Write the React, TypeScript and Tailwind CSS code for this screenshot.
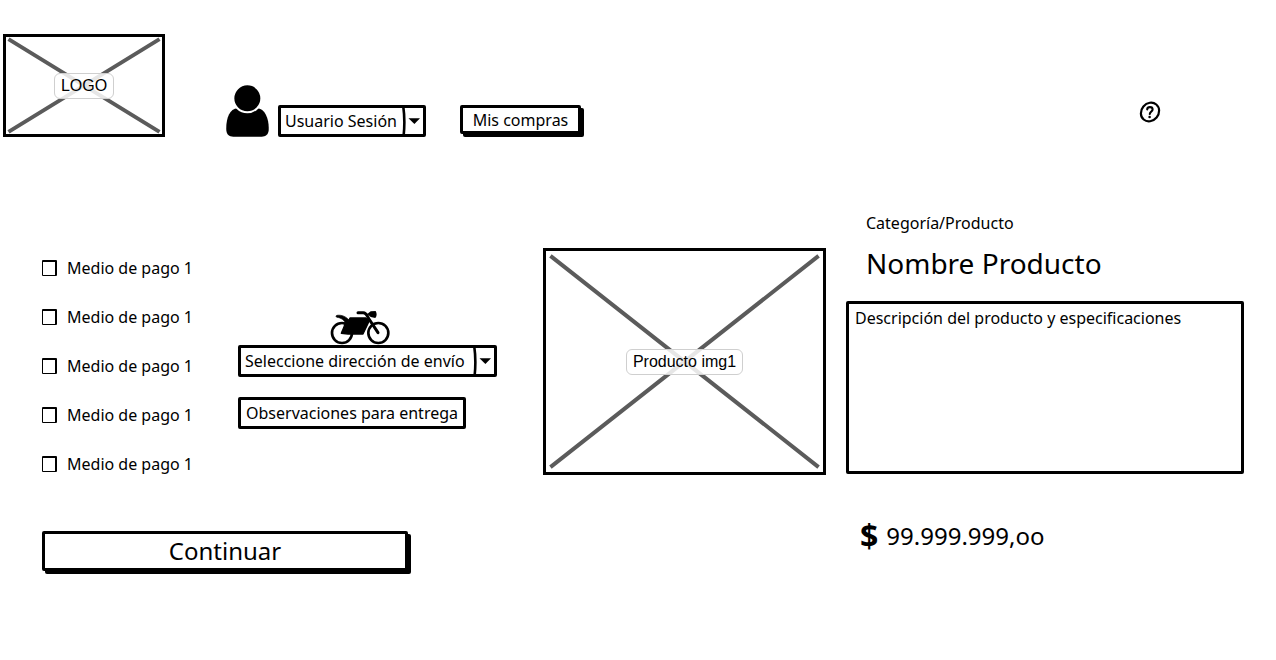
import React from "react";

const payments = [
  "Medio de pago 1",
  "Medio de pago 1",
  "Medio de pago 1",
  "Medio de pago 1",
  "Medio de pago 1",
];

function Placeholder({ label, className }: { label: string; className: string }) {
  return (
    <div
      role="img"
      aria-label={label}
      className={`relative flex items-center justify-center border-3 border-black ${className}`}
    >
      <svg
        className="absolute inset-0 size-full"
        viewBox="0 0 100 100"
        preserveAspectRatio="none"
        aria-hidden="true"
      >
        <path
          d="M1.6 2.2 L98.4 97.8 M98.4 2.2 L1.6 97.8"
          stroke="#5b5b5b"
          strokeWidth="4"
          fill="none"
          vectorEffect="non-scaling-stroke"
        />
      </svg>
      <span className="relative rounded-md border border-[#cfcfcf] bg-white/85 px-1.5 font-['Liberation_Sans',sans-serif] text-base leading-6">
        {label}
      </span>
    </div>
  );
}

function SelectBox({ id, label, className }: { id: string; label: string; className: string }) {
  return (
    <div className={`relative ${className}`}>
      <select
        id={id}
        aria-label={label}
        className="block h-8 w-full appearance-none rounded-xs border-3 border-black bg-white pr-6 pl-1 text-base leading-6"
      >
        <option>{label}</option>
      </select>
      <svg
        className="pointer-events-none absolute top-0 right-0 h-8 w-6"
        viewBox="0 0 24 32"
        aria-hidden="true"
      >
        <path d="M1.2 1 C2.5 10 2.8 20 1.6 31" stroke="black" strokeWidth="2.6" fill="none" />
        <path d="M6.5 13.2 H18 L12.4 19 Z" fill="black" />
      </svg>
    </div>
  );
}

function UserIcon() {
  return (
    <svg className="h-[52px] w-11 shrink-0" viewBox="30 28 132 156" aria-hidden="true">
      <path
        d="M34 164 C32 135 42 98 68 98 H126 C152 98 163 135 161 164 C160 177 152 183 140 183 H55 C42 183 35 177 34 164 Z"
        fill="black"
      />
      <circle cx="97" cy="68" r="42" fill="black" stroke="white" strokeWidth="6" />
    </svg>
  );
}

function HelpIcon() {
  return (
    <svg className="size-[22px]" viewBox="0 0 22 22" fill="none" stroke="black" aria-hidden="true">
      <ellipse cx="11" cy="11" rx="9.8" ry="8.6" strokeWidth="2.2" transform="rotate(-50 11 11)" />
      <path d="M8.2 8.4 C8.4 5.4 13.6 5.3 13.6 8.5 C13.6 10.5 11 10.6 10.8 13" strokeWidth="2.1" strokeLinecap="round" />
      <circle cx="10.6" cy="16" r="1.3" fill="black" stroke="none" />
    </svg>
  );
}

function MotorbikeIcon() {
  return (
    <svg className="h-[35px] w-[60px]" viewBox="30 18 180 105" fill="none" stroke="black" aria-hidden="true">
      <circle cx="66" cy="87" r="30" strokeWidth="8" />
      <circle cx="175" cy="87" r="30" strokeWidth="8" />
      <path
        d="M51 34 C64 32 77 37 87 48 L78 62 C74 48 62 41 51 40 C47 39 47 35 51 34 Z"
        fill="black"
        strokeWidth="2"
        strokeLinejoin="round"
      />
      <path
        d="M90 42 H138 L149 48 L129 90 H84 L64 88 C66 80 73 70 74 62 L84 54 Z"
        fill="black"
        strokeWidth="4"
        strokeLinejoin="round"
      />
      <path d="M114 26 H130 C140 26 141 36 147 45 L174 86" strokeWidth="9" strokeLinecap="round" strokeLinejoin="round" />
      <path d="M142 30 L152 22 L167 21 C171 28 171 36 166 42 L152 39 Z" fill="black" stroke="none" />
    </svg>
  );
}

export default function App() {
  return (
    <div className="min-h-screen bg-white pt-[34px] pb-10 font-['Noto_Sans',sans-serif] text-base text-black">
      <header className="flex items-end pr-[115px] pl-[3px]">
        <Placeholder label="LOGO" className="h-[103px] w-[162px]" />
        <div className="ml-[60px] flex items-end gap-[9px]">
          <UserIcon />
          <SelectBox id="session" label="Usuario Sesión" className="w-[148px]" />
        </div>
        <button
          type="button"
          className="mb-[3px] ml-[34px] h-[29px] w-[121px] rounded-xs border-3 border-black bg-white leading-5 shadow-[3px_3px_0_black]"
        >
          Mis compras
        </button>
        <button type="button" aria-label="Ayuda" className="mb-3.5 ml-auto">
          <HelpIcon />
        </button>
      </header>

      <main className="flex pt-[74px] pr-8 pl-[42px]">
        <section className="mr-[46px] w-[455px] shrink-0 pt-8">
          <div className="flex">
            <ul className="w-[196px]">
              {payments.map((name, i) => (
                <li key={i} className="flex h-[49px] items-center gap-2.5">
                  <input
                    id={`payment-${i}`}
                    type="checkbox"
                    className="h-4 w-[15px] appearance-none rounded-[1px] border border-t-2 border-r-2 border-black bg-white checked:bg-black"
                  />
                  <label htmlFor={`payment-${i}`}>{name}</label>
                </li>
              ))}
            </ul>
            <div className="flex-1 pt-[67px]">
              <div className="flex justify-center pr-4">
                <MotorbikeIcon />
              </div>
              <SelectBox id="address" label="Seleccione dirección de envío" className="w-full" />
              <input
                type="text"
                aria-label="Observaciones para entrega"
                defaultValue="Observaciones para entrega"
                className="mt-5 block h-8 w-[228px] rounded-xs border-3 border-black bg-white pl-[5px] leading-6"
              />
            </div>
          </div>
          <button
            type="button"
            className="mt-[43px] block h-10 w-[366px] rounded-xs border-3 border-black bg-white text-2xl leading-8 shadow-[3px_3px_0_black]"
          >
            Continuar
          </button>
        </section>

        <div className="flex flex-1 items-start gap-5">
          <div className="min-w-0 flex-[283] pt-[37px]">
            <Placeholder label="Producto img1" className="aspect-[283/227] w-full" />
          </div>
          <section className="min-w-0 flex-[398]">
            <p className="pl-5 leading-6">Categoría/Producto</p>
            <h1 className="mt-2 pl-5 text-[28px] leading-10">Nombre Producto</h1>
            <textarea
              aria-label="Descripción del producto"
              defaultValue="Descripción del producto y especificaciones"
              className="mt-[18px] block h-[173px] w-full resize-none rounded-xs border-3 border-black bg-white px-1.5 py-0.5 leading-6"
            />
            <p className="mt-10 flex items-center gap-2 pl-3.5 text-2xl leading-11">
              <span className="text-[32px] leading-11 font-bold">$</span>
              <span>99.999.999,oo</span>
            </p>
          </section>
        </div>
      </main>
    </div>
  );
}
